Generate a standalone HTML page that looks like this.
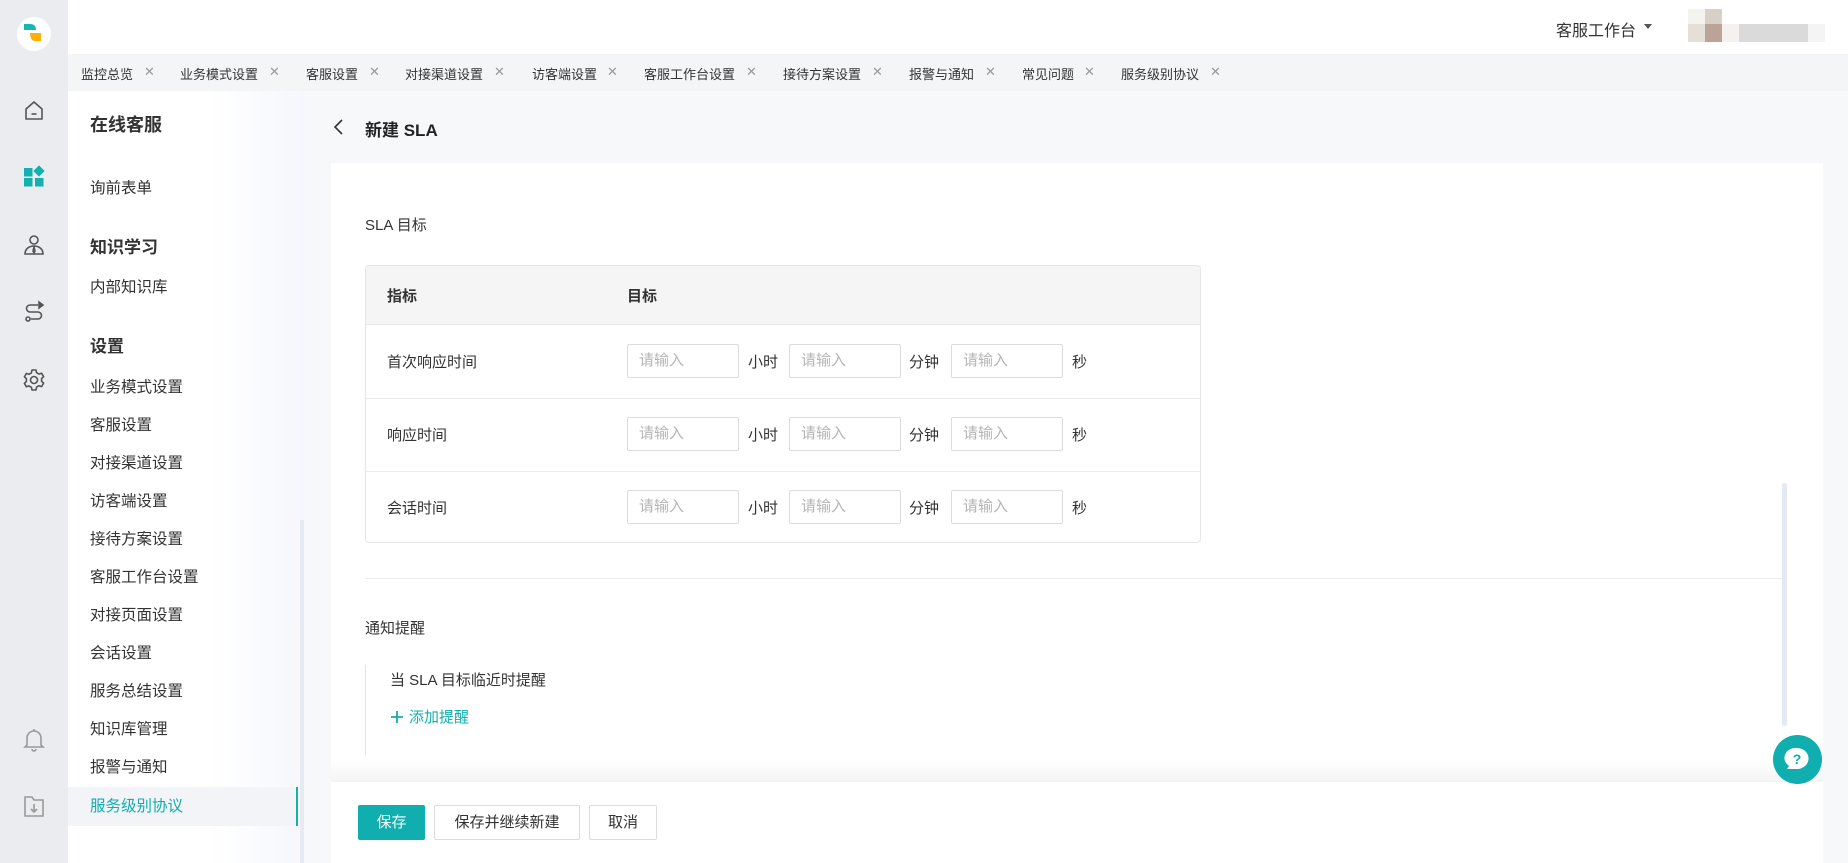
<!DOCTYPE html>
<html><head><meta charset="utf-8">
<style>
*{margin:0;padding:0;box-sizing:border-box}
body{width:1848px;height:863px;overflow:hidden;background:#f7f8fa;font-family:"Liberation Sans","Noto Sans CJK SC",sans-serif;color:#333;position:relative}
.a{position:absolute;white-space:nowrap}
.rail{left:0;top:0;width:68px;height:863px;background:#ebecf0}
.hdr{left:68px;top:0;width:1780px;height:54px;background:#fff}
.tabs{left:68px;top:54px;width:1780px;height:37px;background:#f4f5f7}
.tab{font-size:13px;top:64px;color:#333}
.x{font-size:13px;color:#999;top:64px}
.side{left:68px;top:91px;width:236px;height:772px;background:linear-gradient(90deg,#fff 0%,#fff 60%,#f5f7fc 100%)}
.si{font-size:15.5px;left:90px;color:#333;line-height:20px}
.sb{font-weight:bold;font-size:17px}
.card{left:331px;top:163px;width:1492px;height:700px;background:#fff}
.inp{width:112px;height:34px;border:1px solid #dcdcdc;border-radius:2px;font-size:15px;color:#b5b5b5;padding-left:11px;line-height:32px}
.u{font-size:15px;color:#333}
.btn{top:805px;height:35px;border:1px solid #dcdcdc;border-radius:2px;background:#fff;font-size:15px;text-align:center;line-height:33px}
</style></head><body>
<div class="a rail"></div>
<div class="a" style="left:17px;top:17px;width:34px;height:34px;border-radius:50%;background:#fff"></div>
<svg class="a" style="left:22px;top:22px" width="24" height="24" viewBox="0 0 24 24"><path d="M2 2h6c4 0 6 2 6 6H2z" fill="#17b5b5"/><path d="M8 11h11v8h-6c-3 0-5-3-5-8z" fill="#ffb000"/></svg>
<svg class="a" style="left:22px;top:99px" width="24" height="24" viewBox="0 0 24 24" fill="none" stroke="#555" stroke-width="1.6"><path d="M4 10l8-7 8 7v10H4z" stroke-linejoin="round"/><path d="M9.5 15h5"/></svg>
<svg class="a" style="left:22px;top:165px" width="24" height="24" viewBox="0 0 24 24" fill="#13b0b0"><rect x="2" y="3" width="8.5" height="8.5"/><rect x="13" y="2" width="8" height="8" transform="rotate(45 17 6)"/><rect x="2" y="13" width="8.5" height="8.5"/><rect x="13" y="13" width="8.5" height="8.5"/></svg>
<svg class="a" style="left:22px;top:233px" width="24" height="24" viewBox="0 0 24 24" fill="none" stroke="#555" stroke-width="1.6"><circle cx="12" cy="7" r="4"/><path d="M3 21c0-5 4-8 9-8s9 3 9 8zM12 14l-1 4 1 2 1-2z"/></svg>
<svg class="a" style="left:22px;top:300px" width="24" height="24" viewBox="0 0 24 24" fill="none" stroke="#555" stroke-width="1.6"><path d="M16 5H8a3.5 3.5 0 0 0 0 7h8a3.5 3.5 0 0 1 0 7H9"/><circle cx="6" cy="19" r="2"/><path d="M17 2l4 3-4 3z" fill="#555"/></svg>
<svg class="a" style="left:22px;top:368px" width="24" height="24" viewBox="0 0 24 24" fill="none" stroke="#555" stroke-width="1.6"><circle cx="12" cy="12" r="3.5"/><path d="M10 2h4l.6 2.7 2.4 1.4 2.6-.9 2 3.5-2 1.8v2.8l2 1.8-2 3.5-2.6-.9-2.4 1.4L14 22h-4l-.6-2.7-2.4-1.4-2.6.9-2-3.5 2-1.8v-2.8l-2-1.8 2-3.5 2.6.9 2.4-1.4z" stroke-linejoin="round"/></svg>
<svg class="a" style="left:22px;top:727px" width="24" height="26" viewBox="0 0 24 26" fill="none" stroke="#999" stroke-width="1.6"><path d="M5 18V11a7 7 0 0 1 14 0v7l2 2H3zM10 22a2 2 0 0 0 4 0M12 2v2"/></svg>
<svg class="a" style="left:23px;top:794px" width="22" height="24" viewBox="0 0 22 24" fill="none" stroke="#999" stroke-width="1.6"><path d="M2 3h7l2 3h9v16H2z"/><path d="M11 10v8M8 15l3 3 3-3"/></svg>

<div class="a hdr"></div>
<div class="a" style="left:1556px;top:17px;font-size:16px;color:#333">客服工作台</div>
<div class="a" style="left:1644px;top:24px;width:0;height:0;border-left:4px solid transparent;border-right:4px solid transparent;border-top:5px solid #555"></div>
<div class="a" style="left:1688px;top:9px;width:17px;height:15px;background:#f5f3ef"></div>
<div class="a" style="left:1705px;top:9px;width:17px;height:15px;background:#d6d0c6"></div>
<div class="a" style="left:1688px;top:24px;width:17px;height:18px;background:#e4e0d8"></div>
<div class="a" style="left:1705px;top:24px;width:17px;height:18px;background:#bba397"></div>
<div class="a" style="left:1722px;top:24px;width:17px;height:18px;background:#f3f2ef"></div>
<div class="a" style="left:1739px;top:24px;width:69px;height:18px;background:#dadada"></div>
<div class="a" style="left:1808px;top:24px;width:17px;height:18px;background:#f4f4f4"></div>

<div class="a tabs"></div>
<div class="a tab" style="left:81px">监控总览</div><div class="a x" style="left:144px">✕</div>
<div class="a tab" style="left:180px">业务模式设置</div><div class="a x" style="left:269px">✕</div>
<div class="a tab" style="left:306px">客服设置</div><div class="a x" style="left:369px">✕</div>
<div class="a tab" style="left:405px">对接渠道设置</div><div class="a x" style="left:494px">✕</div>
<div class="a tab" style="left:532px">访客端设置</div><div class="a x" style="left:607px">✕</div>
<div class="a tab" style="left:644px">客服工作台设置</div><div class="a x" style="left:746px">✕</div>
<div class="a tab" style="left:783px">接待方案设置</div><div class="a x" style="left:872px">✕</div>
<div class="a tab" style="left:909px">报警与通知</div><div class="a x" style="left:985px">✕</div>
<div class="a tab" style="left:1022px">常见问题</div><div class="a x" style="left:1084px">✕</div>
<div class="a tab" style="left:1121px">服务级别协议</div><div class="a x" style="left:1210px">✕</div>

<div class="a side"></div>
<div class="a" style="left:300px;top:520px;width:4px;height:343px;background:#e6eaf3"></div>
<div class="a si sb" style="top:115px;font-size:18px">在线客服</div>
<div class="a si" style="top:179px">询前表单</div>
<div class="a si sb" style="top:238px">知识学习</div>
<div class="a si" style="top:278px">内部知识库</div>
<div class="a si sb" style="top:337px">设置</div>
<div class="a si" style="top:378px">业务模式设置</div>
<div class="a si" style="top:416px">客服设置</div>
<div class="a si" style="top:454px">对接渠道设置</div>
<div class="a si" style="top:492px">访客端设置</div>
<div class="a si" style="top:530px">接待方案设置</div>
<div class="a si" style="top:568px">客服工作台设置</div>
<div class="a si" style="top:606px">对接页面设置</div>
<div class="a si" style="top:644px">会话设置</div>
<div class="a si" style="top:682px">服务总结设置</div>
<div class="a si" style="top:720px">知识库管理</div>
<div class="a si" style="top:758px">报警与通知</div>
<div class="a" style="left:68px;top:787px;width:230px;height:39px;background:#f2f4f8"></div>
<div class="a" style="left:296px;top:787px;width:2px;height:39px;background:#13b0b0"></div>
<div class="a si" style="top:797px;color:#13adad">服务级别协议</div>

<svg class="a" style="left:332px;top:118px" width="14" height="18" viewBox="0 0 14 18" fill="none" stroke="#333" stroke-width="1.6"><path d="M10 2L3 9l7 7"/></svg>
<div class="a" style="left:365px;top:116px;font-size:17px;font-weight:bold;color:#222">新建 SLA</div>

<div class="a card"></div>
<div class="a" style="left:365px;top:214px;font-size:15px">SLA 目标</div>
<div class="a" style="left:365px;top:265px;width:836px;height:278px;border:1px solid #e6e6e6;border-radius:4px;background:#fff;overflow:hidden">
<div style="height:59px;background:#f5f5f5;border-bottom:1px solid #e8e8e8"></div>
<div style="position:absolute;top:132px;left:0;right:0;border-top:1px solid #eaeaea"></div>
<div style="position:absolute;top:205px;left:0;right:0;border-top:1px solid #eaeaea"></div>
</div>
<div class="a" style="left:387px;top:285px;font-size:15px;font-weight:bold">指标</div>
<div class="a" style="left:627px;top:285px;font-size:15px;font-weight:bold">目标</div>

<div class="a u" style="left:387px;top:351px">首次响应时间</div>
<div class="a u" style="left:387px;top:424px">响应时间</div>
<div class="a u" style="left:387px;top:497px">会话时间</div>

<div class="a inp" style="left:627px;top:344px">请输入</div><div class="a u" style="left:748px;top:351px">小时</div>
<div class="a inp" style="left:789px;top:344px">请输入</div><div class="a u" style="left:909px;top:351px">分钟</div>
<div class="a inp" style="left:951px;top:344px">请输入</div><div class="a u" style="left:1072px;top:351px">秒</div>

<div class="a inp" style="left:627px;top:417px">请输入</div><div class="a u" style="left:748px;top:424px">小时</div>
<div class="a inp" style="left:789px;top:417px">请输入</div><div class="a u" style="left:909px;top:424px">分钟</div>
<div class="a inp" style="left:951px;top:417px">请输入</div><div class="a u" style="left:1072px;top:424px">秒</div>

<div class="a inp" style="left:627px;top:490px">请输入</div><div class="a u" style="left:748px;top:497px">小时</div>
<div class="a inp" style="left:789px;top:490px">请输入</div><div class="a u" style="left:909px;top:497px">分钟</div>
<div class="a inp" style="left:951px;top:490px">请输入</div><div class="a u" style="left:1072px;top:497px">秒</div>

<div class="a" style="left:365px;top:578px;width:1418px;height:1px;background:#ebebeb"></div>
<div class="a" style="left:1782px;top:483px;width:5px;height:243px;border-radius:3px;background:#e4e9f3"></div>

<div class="a" style="left:365px;top:617px;font-size:15px">通知提醒</div>
<div class="a" style="left:365px;top:665px;width:1px;height:90px;background:#e3e3e3"></div>
<div class="a" style="left:390px;top:669px;font-size:15px">当 SLA 目标临近时提醒</div>
<svg class="a" style="left:390px;top:710px" width="14" height="14" viewBox="0 0 14 14" stroke="#13adad" stroke-width="1.8"><path d="M7 1v12M1 7h12"/></svg>
<div class="a" style="left:409px;top:706px;font-size:15px;color:#13adad">添加提醒</div>

<div class="a" style="left:331px;top:760px;width:1492px;height:22px;background:linear-gradient(#fff,#f4f4f4)"></div>
<div class="a" style="left:331px;top:782px;width:1492px;height:81px;background:#fff"></div>
<div class="a btn" style="left:358px;width:67px;background:#10aeae;border-color:#10aeae;color:#fff">保存</div>
<div class="a btn" style="left:434px;width:146px">保存并继续新建</div>
<div class="a btn" style="left:589px;width:68px">取消</div>

<div class="a" style="left:1773px;top:735px;width:49px;height:49px;border-radius:50%;background:#10aeae"></div>
<svg class="a" style="left:1783px;top:745px" width="28" height="28" viewBox="0 0 28 28"><path d="M14 3a11 10 0 0 1 0 21H4l2-3A11 10 0 0 1 14 3z" fill="#fff"/><text x="14" y="19" font-size="14" font-weight="bold" text-anchor="middle" fill="#10aeae" font-family="Liberation Sans">?</text></svg>
</body></html>
